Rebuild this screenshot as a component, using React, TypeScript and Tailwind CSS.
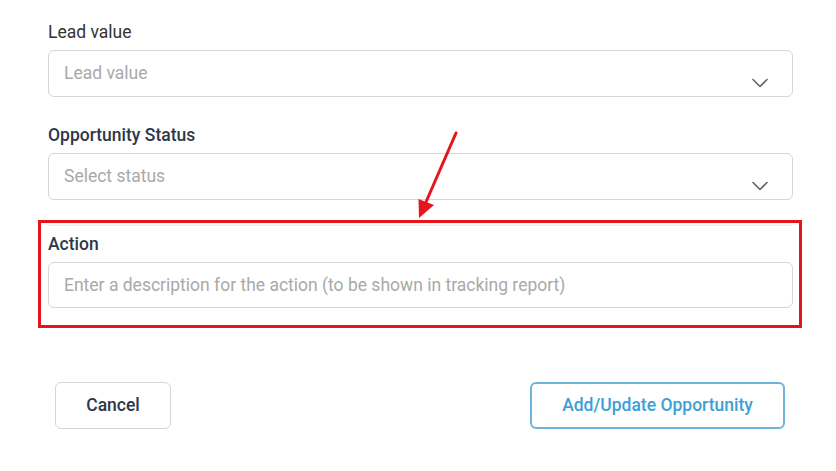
import React from 'react'

function Chevron() {
    return (
        <svg width="16" height="10" viewBox="0 0 16 10" className="mt-[19px] mr-[24px] shrink-0">
            <path d="M1 1.5 L8 8.5 L15 1.5" fill="none" stroke="#5f6368" strokeWidth="1.6" strokeLinecap="round" strokeLinejoin="round" />
        </svg>
    )
}

function SelectBox({ placeholder }: { placeholder: string }) {
    return (
        <div className="flex h-[47px] items-center justify-between rounded-[6px] border border-[#d6d6d6] bg-white pl-[15px]">
            <span className="text-[17.5px] text-[#a9a9a9]">{placeholder}</span>
            <Chevron />
        </div>
    )
}

export default function App() {
    return (
        <div className="relative min-h-[471px] w-[836px] bg-white font-['Roboto',sans-serif]">
            {/* annotation arrow */}
            <svg className="pointer-events-none absolute left-0 top-0" width="836" height="471">
                <line x1="456" y1="133" x2="426" y2="202" stroke="#e8141b" strokeWidth="3" strokeLinecap="round" />
                <polygon points="419,218 418.5,199 434,205" fill="#e8141b" />
            </svg>

            <div className="flex flex-col pl-[48px] pr-[43px] pt-[20px]">
                <label className="mb-[6px] text-[17.5px] leading-6 text-[#333333]">Lead value</label>
                <SelectBox placeholder="Lead value" />

                <label className="mb-[6px] mt-[26px] text-[17.5px] font-medium leading-6 text-[#2d3748]">Opportunity Status</label>
                <SelectBox placeholder="Select status" />

                <div className="relative mt-[25px] border-t border-[#eef0f2] pt-[6px]">
                    <div className="pointer-events-none absolute -left-[10px] -right-[9px] -top-[6px] -bottom-[20px] border-[3px] border-[#e8141b]" />
                    <label className="mb-[6px] block text-[17.5px] font-medium leading-6 text-[#2d3748]">Action</label>
                    <div className="flex h-[46px] items-center rounded-[6px] border border-[#d6d6d6] bg-white pl-[15px]">
                        <span className="text-[17.5px] text-[#a9a9a9]">
                            Enter a description for the action (to be shown in tracking report)
                        </span>
                    </div>
                </div>

                <div className="mt-[74px] flex items-center justify-between pl-[7px] pr-[8px]">
                    <button className="h-[47px] w-[116px] rounded-[6px] border border-[#d6d6d6] bg-white text-[17.5px] font-medium text-[#2d3748]">
                        Cancel
                    </button>
                    <button className="h-[47px] w-[255px] rounded-[6px] border-2 border-[#6cb4de] bg-white text-[17.5px] font-medium text-[#3c9fd8]">
                        Add/Update Opportunity
                    </button>
                </div>
            </div>
        </div>
    )
}
